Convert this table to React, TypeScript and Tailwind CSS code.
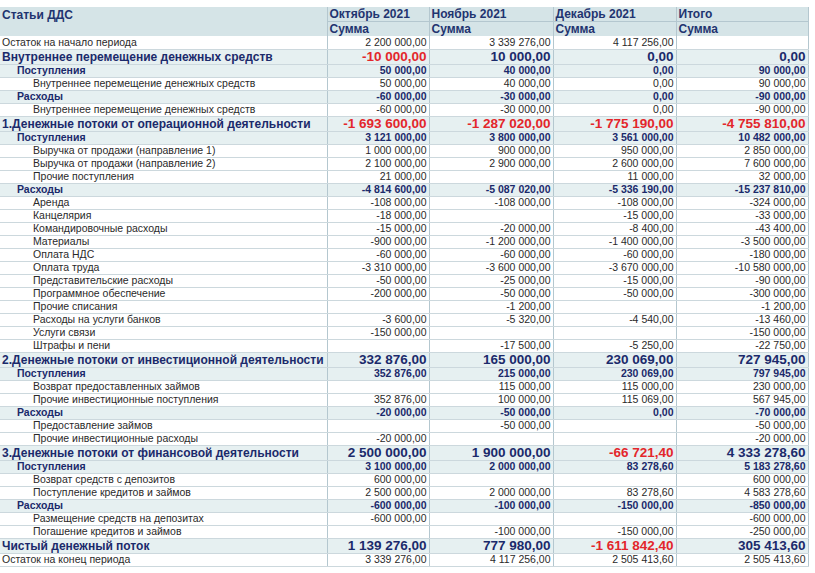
type Kind = "plain" | "big" | "group" | "item";

type Row = { kind: Kind; label: string; v: string[] };

const rows: Row[] = [
  { kind: "plain", label: "Остаток на начало периода", v: ["2 200 000,00", "3 339 276,00", "4 117 256,00", ""] },
  { kind: "big", label: "Внутреннее перемещение денежных средств", v: ["-10 000,00", "10 000,00", "0,00", "0,00"] },
  { kind: "group", label: "Поступления", v: ["50 000,00", "40 000,00", "0,00", "90 000,00"] },
  { kind: "item", label: "Внутреннее перемещение денежных средств", v: ["50 000,00", "40 000,00", "0,00", "90 000,00"] },
  { kind: "group", label: "Расходы", v: ["-60 000,00", "-30 000,00", "0,00", "-90 000,00"] },
  { kind: "item", label: "Внутреннее перемещение денежных средств", v: ["-60 000,00", "-30 000,00", "0,00", "-90 000,00"] },
  { kind: "big", label: "1.Денежные потоки от операционной деятельности", v: ["-1 693 600,00", "-1 287 020,00", "-1 775 190,00", "-4 755 810,00"] },
  { kind: "group", label: "Поступления", v: ["3 121 000,00", "3 800 000,00", "3 561 000,00", "10 482 000,00"] },
  { kind: "item", label: "Выручка от продажи (направление 1)", v: ["1 000 000,00", "900 000,00", "950 000,00", "2 850 000,00"] },
  { kind: "item", label: "Выручка от продажи (направление 2)", v: ["2 100 000,00", "2 900 000,00", "2 600 000,00", "7 600 000,00"] },
  { kind: "item", label: "Прочие поступления", v: ["21 000,00", "", "11 000,00", "32 000,00"] },
  { kind: "group", label: "Расходы", v: ["-4 814 600,00", "-5 087 020,00", "-5 336 190,00", "-15 237 810,00"] },
  { kind: "item", label: "Аренда", v: ["-108 000,00", "-108 000,00", "-108 000,00", "-324 000,00"] },
  { kind: "item", label: "Канцелярия", v: ["-18 000,00", "", "-15 000,00", "-33 000,00"] },
  { kind: "item", label: "Командировочные расходы", v: ["-15 000,00", "-20 000,00", "-8 400,00", "-43 400,00"] },
  { kind: "item", label: "Материалы", v: ["-900 000,00", "-1 200 000,00", "-1 400 000,00", "-3 500 000,00"] },
  { kind: "item", label: "Оплата НДС", v: ["-60 000,00", "-60 000,00", "-60 000,00", "-180 000,00"] },
  { kind: "item", label: "Оплата труда", v: ["-3 310 000,00", "-3 600 000,00", "-3 670 000,00", "-10 580 000,00"] },
  { kind: "item", label: "Представительские расходы", v: ["-50 000,00", "-25 000,00", "-15 000,00", "-90 000,00"] },
  { kind: "item", label: "Программное обеспечение", v: ["-200 000,00", "-50 000,00", "-50 000,00", "-300 000,00"] },
  { kind: "item", label: "Прочие списания", v: ["", "-1 200,00", "", "-1 200,00"] },
  { kind: "item", label: "Расходы на услуги банков", v: ["-3 600,00", "-5 320,00", "-4 540,00", "-13 460,00"] },
  { kind: "item", label: "Услуги связи", v: ["-150 000,00", "", "", "-150 000,00"] },
  { kind: "item", label: "Штрафы и пени", v: ["", "-17 500,00", "-5 250,00", "-22 750,00"] },
  { kind: "big", label: "2.Денежные потоки от инвестиционной деятельности", v: ["332 876,00", "165 000,00", "230 069,00", "727 945,00"] },
  { kind: "group", label: "Поступления", v: ["352 876,00", "215 000,00", "230 069,00", "797 945,00"] },
  { kind: "item", label: "Возврат предоставленных займов", v: ["", "115 000,00", "115 000,00", "230 000,00"] },
  { kind: "item", label: "Прочие инвестиционные поступления", v: ["352 876,00", "100 000,00", "115 069,00", "567 945,00"] },
  { kind: "group", label: "Расходы", v: ["-20 000,00", "-50 000,00", "0,00", "-70 000,00"] },
  { kind: "item", label: "Предоставление займов", v: ["", "-50 000,00", "", "-50 000,00"] },
  { kind: "item", label: "Прочие инвестиционные расходы", v: ["-20 000,00", "", "", "-20 000,00"] },
  { kind: "big", label: "3.Денежные потоки от финансовой деятельности", v: ["2 500 000,00", "1 900 000,00", "-66 721,40", "4 333 278,60"] },
  { kind: "group", label: "Поступления", v: ["3 100 000,00", "2 000 000,00", "83 278,60", "5 183 278,60"] },
  { kind: "item", label: "Возврат средств с депозитов", v: ["600 000,00", "", "", "600 000,00"] },
  { kind: "item", label: "Поступление кредитов и займов", v: ["2 500 000,00", "2 000 000,00", "83 278,60", "4 583 278,60"] },
  { kind: "group", label: "Расходы", v: ["-600 000,00", "-100 000,00", "-150 000,00", "-850 000,00"] },
  { kind: "item", label: "Размещение средств на депозитах", v: ["-600 000,00", "", "", "-600 000,00"] },
  { kind: "item", label: "Погашение кредитов и займов", v: ["", "-100 000,00", "-150 000,00", "-250 000,00"] },
  { kind: "big", label: "Чистый денежный поток", v: ["1 139 276,00", "777 980,00", "-1 611 842,40", "305 413,60"] },
  { kind: "plain", label: "Остаток на конец периода", v: ["3 339 276,00", "4 117 256,00", "2 505 413,60", "2 505 413,60"] },
];

const months = ["Октябрь 2021", "Ноябрь 2021", "Декабрь 2021", "Итого"];

function labelClass(kind: Kind) {
  if (kind === "big") return "pl-[2px] text-[12px] font-bold text-[#1b2a6b]";
  if (kind === "group") return "pl-[17px] text-[10.5px] font-bold text-[#1b2a6b]";
  if (kind === "item") return "pl-[33px] text-[10.5px] text-[#2a2a2a]";
  return "pl-[2px] text-[10.5px] text-[#2a2a2a]";
}

function valueClass(kind: Kind, value: string) {
  if (kind === "big") {
    return value.startsWith("-")
      ? "text-[13.5px] font-bold text-[#e3262b]"
      : "text-[13.5px] font-bold text-[#1b2a6b]";
  }
  if (kind === "group") return "text-[10.5px] font-bold text-[#1b2a6b]";
  return "text-[10.5px] text-[#2a2a2a]";
}

export default function App() {
  return (
    <div className="w-[815px] h-[573px] bg-white pt-[7px] font-['Liberation_Sans',Arial,sans-serif] overflow-hidden">
      <table className="w-[808px] table-fixed border-collapse leading-none">
        <colgroup>
          <col className="w-[327px]" />
          <col className="w-[102px]" />
          <col className="w-[124px]" />
          <col className="w-[123px]" />
          <col className="w-[132px]" />
        </colgroup>
        <thead>
          <tr className="h-[14px] bg-[#d5e4e7]">
            <th
              rowSpan={2}
              className="align-top pt-[2px] pl-[2px] text-left text-[12px] font-bold text-[#1f3470] border-r border-[#b4c7cf]"
            >
              Статьи ДДС
            </th>
            {months.map((m) => (
              <th
                key={m}
                className="pl-[2px] text-left text-[12px] font-bold text-[#1f3470] border-r border-b border-[#b4c7cf]"
              >
                {m}
              </th>
            ))}
          </tr>
          <tr className="h-[15px] bg-[#d5e4e7]">
            {months.map((m) => (
              <th
                key={m}
                className="pl-[2px] text-left text-[12px] font-bold text-[#1f3470] border-r border-[#b4c7cf]"
              >
                Сумма
              </th>
            ))}
          </tr>
        </thead>
        <tbody>
          {rows.map((r, i) => {
            const shaded = r.kind === "big" || r.kind === "group";
            return (
              <tr
                key={i}
                className={
                  (r.kind === "big" ? "h-[15px] " : "h-[13px] ") +
                  (shaded ? "bg-[#e6f0f1]" : "bg-white")
                }
              >
                <td className={"whitespace-nowrap border-b border-b-[#ccd8dd] border-r border-r-[#b4c7cf] " + labelClass(r.kind)}>
                  {r.label}
                </td>
                {r.v.map((v, j) => (
                  <td
                    key={j}
                    className={
                      "whitespace-nowrap text-right pr-[2px] border-b border-b-[#ccd8dd] border-r border-r-[#b4c7cf] " +
                      valueClass(r.kind, v)
                    }
                  >
                    {v}
                  </td>
                ))}
              </tr>
            );
          })}
        </tbody>
      </table>
    </div>
  );
}
